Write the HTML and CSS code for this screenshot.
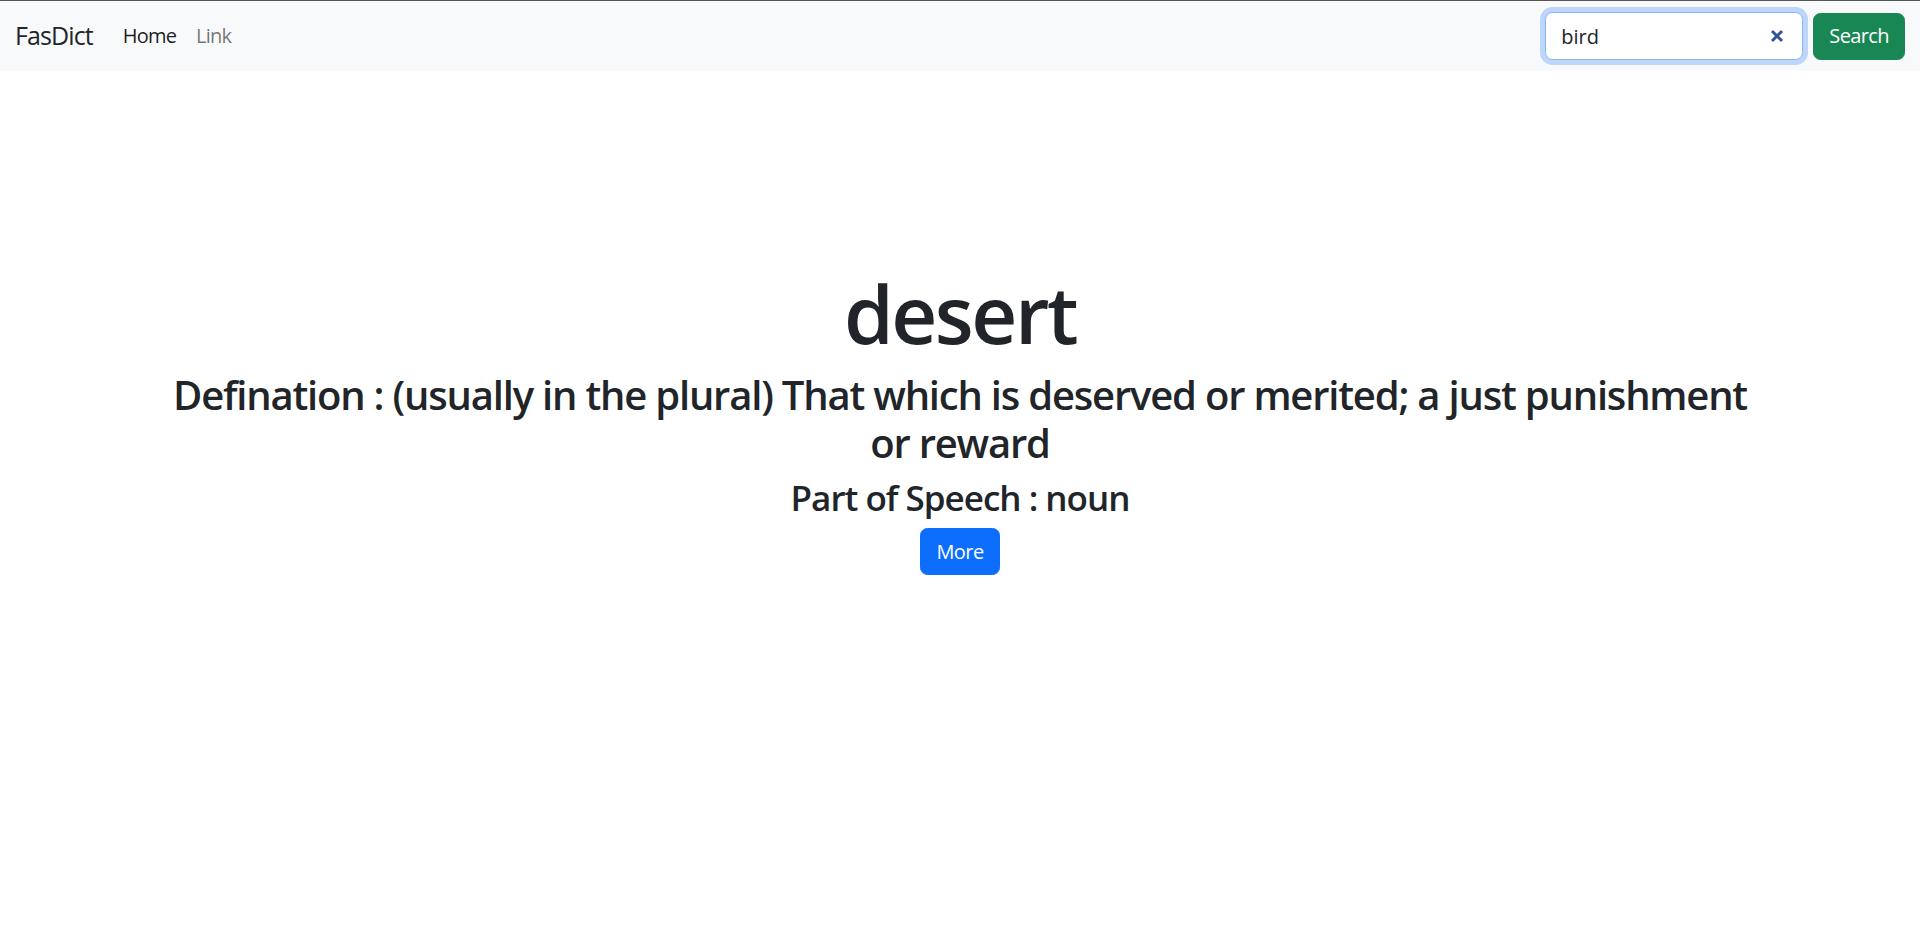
FILE: index.html
```html
<!DOCTYPE html>
<html lang="en">
<head>
<meta charset="utf-8">
<title>FasDict</title>
<link rel="stylesheet" href="styles.css">
</head>
<body>
<nav class="navbar">
  <div class="nav-left">
    <a class="brand" href="#">FasDict</a>
    <ul class="nav-links">
      <li><a class="nav-link active" href="#">Home</a></li>
      <li><a class="nav-link" href="#">Link</a></li>
    </ul>
  </div>
  <form class="search-form">
    <div class="search-wrap">
      <input class="search-input" type="search" value="bird" aria-label="Search">
      <svg class="clear-icon" viewBox="0 0 14 14" width="14" height="14" aria-hidden="true">
        <path d="M2 2 L12 12 M12 2 L2 12" stroke="#2f5594" stroke-width="3" stroke-linecap="butt"/>
      </svg>
    </div>
    <button class="btn btn-success" type="button">Search</button>
  </form>
</nav>
<main class="container">
  <h1 class="word">desert</h1>
  <h2 class="definition">Defination : (usually in the plural) That which is deserved or merited; a just punishment or reward</h2>
  <h3 class="pos">Part of Speech : noun</h3>
  <button class="btn btn-primary" type="button">More</button>
</main>
</body>
</html>
```
FILE: styles.css
```css
* { box-sizing: border-box; }
html, body { margin: 0; padding: 0; }
body {
  border-top: 1px solid #555;
  font-family: "Open Sans", "Noto Sans", sans-serif;
  font-size: 20px;
  color: #212529;
  background: #fff;
}
.navbar {
  display: flex;
  align-items: center;
  justify-content: space-between;
  padding: 10px 15px;
  background: #f8f9fa;
}
.nav-left { display: flex; align-items: center; }
.brand {
  font-size: 25px;
  line-height: 37.5px;
  padding: 6px 0;
  margin-right: 20px;
  color: #212529;
  text-decoration: none;
  letter-spacing: -0.9px;
}
.nav-links { display: flex; list-style: none; margin: 0; padding: 0; }
.nav-link {
  display: block;
  padding: 10px;
  line-height: 30px;
  color: rgba(0,0,0,.55);
  text-decoration: none;
  letter-spacing: -0.8px;
}
.nav-link.active { color: rgba(0,0,0,.9); }
.search-form { display: flex; align-items: center; }
.search-wrap { position: relative; margin-right: 10px; }
.search-input {
  width: 258px;
  height: 48px;
  padding: 7.5px 15px;
  font: inherit;
  font-size: 20px;
  color: #212529;
  border: 1px solid #86b7fe;
  border-radius: 7.5px;
  box-shadow: 0 0 0 5px rgba(13,110,253,.25);
  outline: none;
  background: #fff;
  -webkit-appearance: none;
  appearance: none;
}
.search-input::-webkit-search-cancel-button { -webkit-appearance: none; display: none; }
.clear-icon { position: absolute; right: 19px; top: 17px; }
.btn {
  font: inherit;
  font-size: 20px;
  line-height: 30px;
  padding: 7.5px 15px;
  border: 1px solid transparent;
  border-radius: 7.5px;
  color: #fff;
  cursor: pointer;
  letter-spacing: -0.6px;
}
.btn-success { background: #198754; border-color: #198754; }
.btn-primary { background: #0d6efd; border-color: #0d6efd; }
.container {
  width: 1650px;
  margin: 0 auto;
  padding: 194px 15px 0;
  text-align: center;
}
.word {
  font-size: 80px;
  font-weight: 600;
  line-height: 1.2;
  margin: 0 0 10px;
  letter-spacing: -2.5px;
}
.definition {
  font-size: 40px;
  font-weight: 600;
  line-height: 1.2;
  margin: 0 0 10px;
  letter-spacing: -1.2px;
}
.pos {
  font-size: 35px;
  font-weight: 600;
  line-height: 1.2;
  margin: 0 0 9px;
  letter-spacing: -1px;
}
```
